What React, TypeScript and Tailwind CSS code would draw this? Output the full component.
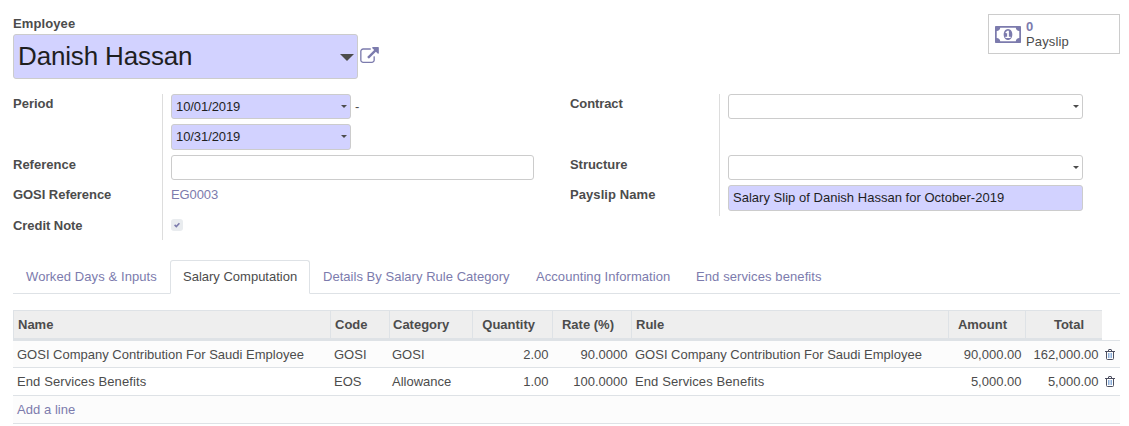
import React from "react";

const TABS = [
  { label: "Worked Days & Inputs", width: "w-[157px]", tracking: "tracking-[0.09px]" },
  { label: "Salary Computation", width: "w-[140px]", tracking: "tracking-normal", active: true },
  { label: "Details By Salary Rule Category", width: "w-[213px]", tracking: "tracking-[0.03px]" },
  { label: "Accounting Information", width: "w-[160px]", tracking: "tracking-[0.06px]" },
  { label: "End services benefits", width: "w-[152px]", tracking: "tracking-[0.1px]" },
];

const COLUMNS = [
  { label: "Name", className: "border-l pl-1" },
  { label: "Code", className: "border-l pl-1" },
  { label: "Category", className: "border-l pl-[3px]" },
  { label: "Quantity", className: "border-l pr-[17px] text-right" },
  { label: "Rate (%)", className: "border-l pr-[17px] text-right" },
  { label: "Rule", className: "border-l pl-1" },
  { label: "Amount", className: "border-l pr-[18px] text-right" },
  { label: "Total", className: "border-l pr-[18px] text-right" },
];

const LINES = [
  {
    name: "GOSI Company Contribution For Saudi Employee",
    code: "GOSI",
    category: "GOSI",
    quantity: "2.00",
    rate: "90.0000",
    amount: "90,000.00",
    total: "162,000.00",
    tracking: "tracking-normal",
  },
  {
    name: "End Services Benefits",
    code: "EOS",
    category: "Allowance",
    quantity: "1.00",
    rate: "100.0000",
    amount: "5,000.00",
    total: "5,000.00",
    tracking: "tracking-[0.1px]",
  },
];

const GRID = "grid grid-cols-[317px_59px_83px_80px_79px_317px_77px_77px_18px]";

function ExternalLinkIcon() {
  return (
    <svg className="mt-[13px] ml-[2px] h-[16px] w-[19px] shrink-0" viewBox="0 0 1792 1536" fill="#7c7bad">
      <path d="M1408 928v320q0 119-84.5 203.5t-203.5 84.5h-832q-119 0-203.5-84.5t-84.5-203.5v-832q0-119 84.5-203.5t203.5-84.5h704q14 0 23 9t9 23v64q0 14-9 23t-23 9h-704q-66 0-113 47t-47 113v832q0 66 47 113t113 47h832q66 0 113-47t47-113v-320q0-14 9-23t23-9h64q14 0 23 9t9 23zm384-864v512q0 26-19 45t-45 19-45-19l-176-176-652 652q-10 10-23 10t-23-10l-114-114q-10-10-10-23t10-23l652-652-176-176q-19-19-19-45t19-45 45-19h512q26 0 45 19t19 45z" />
    </svg>
  );
}

function MoneyIcon() {
  return (
    <svg className="h-[17px] w-[26px] shrink-0" viewBox="0 256 1920 1280" preserveAspectRatio="none" fill="#7c7bad">
      <path d="M768 1152h384v-96h-128v-448h-114l-148 137 77 80q42-37 55-57h2v288h-128v96zm512-256q0 70-21 142t-59.5 134-101.5 101-138 39-138-39-101.5-101-59.5-134-21-142 21-142 59.5-134 101.5-101 138-39 138 39 101.5 101 59.5 134 21 142zm512 256v-512q-106 0-181-75t-75-181h-1152q0 106-75 181t-181 75v512q106 0 181 75t75 181h1152q0-106 75-181t181-75zm128-832v1152q0 26-19 45t-45 19h-1792q-26 0-45-19t-19-45v-1152q0-26 19-45t45-19h1792q26 0 45 19t19 45z" />
    </svg>
  );
}

function TrashIcon() {
  return (
    <svg className="h-[11px] w-[10px]" viewBox="0 0 10 11" fill="none">
      <path d="M3.5 4v5M5 4v5M6.5 4v5" stroke="#6f9ad0" strokeWidth="0.8" />
      <path d="M0 2.5h10M1.5 2.5v7q0 1 1 1h5q1 0 1-1v-7M3.3 2.2l.5-1.7h2.4l.5 1.7" stroke="#4c4f60" />
    </svg>
  );
}

function Caret() {
  return (
    <svg className="-mt-px h-[3px] w-[6px] shrink-0" viewBox="0 0 6 3" fill="#4c4c4c">
      <path d="M0 0h6L3 3z" />
    </svg>
  );
}

function Field({ value = "", required = false, caret = false, className = "" }: {
  value?: string;
  required?: boolean;
  caret?: boolean;
  className?: string;
}) {
  return (
    <div
      className={`flex items-center justify-between rounded-[3px] border border-[#ccc] pr-[3px] pl-1 text-[#1f1f1f] ${
        required ? "bg-[#d2d2ff]" : "bg-white"
      } ${className}`}
    >
      <span>{value}</span>
      {caret && <Caret />}
    </div>
  );
}

function Label({ children, className = "" }: { children: React.ReactNode; className?: string }) {
  return <div className={`font-bold ${className}`}>{children}</div>;
}

export default function App() {
  return (
    <div className="h-[426px] w-[1129px] overflow-hidden bg-white pr-[9px] pl-[13px] font-['Liberation_Sans',Arial,sans-serif] text-[13px] leading-[20px] text-[#4c4c4c]">
      <header className="flex h-[94px] justify-between pt-[14px]">
        <div>
          <Label className="tracking-[0.1px]">Employee</Label>
          <div className="flex">
            <div className="flex h-[45px] w-[345px] items-center justify-between rounded-[3px] border border-[#ccc] bg-[#d2d2ff] pr-[3px] pl-1 text-[26px] text-[#1f1f1f]">
              <span className="pb-[2px] tracking-[-0.15px]">Danish Hassan</span>
              <svg className="mt-[2px] h-[7px] w-[14px]" viewBox="0 0 14 7" fill="#4c4c4c">
                <path d="M0 0h14L7 7z" />
              </svg>
            </div>
            <ExternalLinkIcon />
          </div>
        </div>
        <div className="flex h-10 w-[132px] items-center gap-[5px] border border-[#ccc] pl-[6px]">
          <MoneyIcon />
          <div className="leading-[15px]">
            <div className="font-bold text-[#7c7bad]">0</div>
            <div className="tracking-[0.15px]">Payslip</div>
          </div>
        </div>
      </header>

      <section className="flex h-[166px]">
        <div className="flex w-[557px]">
          <div className="h-[146px] w-[150px] border-r border-[#ddd]">
            <Label className="h-[61px]">Period</Label>
            <Label className="h-[30px]">Reference</Label>
            <Label className="h-[31px] tracking-[-0.05px]">GOSI Reference</Label>
            <Label className="tracking-[-0.05px]">Credit Note</Label>
          </div>
          <div className="pl-2">
            <div className="flex h-[30px] gap-1">
              <Field value="10/01/2019" required caret className="h-[25px] w-[180px] tracking-[-0.08px]" />
              <span className="pt-[3px]">-</span>
            </div>
            <Field value="10/31/2019" required caret className="h-[26px] w-[180px] tracking-[-0.08px]" />
            <Field className="mt-[5px] h-[25px] w-[363px]" />
            <div className="mt-[5px] tracking-[-0.1px] text-[#7c7bad]">EG0003</div>
            <div className="mt-[14px] flex h-3 w-3 items-center justify-center rounded-[3px] bg-[#e9ecef]">
              <svg className="h-[6px] w-[6px]" viewBox="0 0 6 6" fill="none" stroke="#7c7bad" strokeWidth="1.6">
                <path d="M.6 2.9 2.3 4.5 5.4 1.2" />
              </svg>
            </div>
          </div>
        </div>
        <div className="flex">
          <div className="h-[122px] w-[150px] border-r border-[#ddd]">
            <Label className="h-[61px] tracking-[-0.1px]">Contract</Label>
            <Label className="h-[30px] tracking-[-0.05px]">Structure</Label>
            <Label className="tracking-[0.08px]">Payslip Name</Label>
          </div>
          <div className="pl-2">
            <Field caret className="h-[25px] w-[355px]" />
            <Field caret className="mt-[36px] h-[25px] w-[355px]" />
            <Field
              value="Salary Slip of Danish Hassan for October-2019"
              required
              className="mt-[5px] h-[26px] w-[355px] tracking-[0.02px]"
            />
          </div>
        </div>
      </section>

      <nav className="flex h-[34px] w-[1107px] border-b border-[#dee2e6]">
        {TABS.map((tab) => (
          <div
            key={tab.label}
            className={`h-[34px] shrink-0 whitespace-nowrap ${tab.width} ${tab.tracking} ${
              tab.active
                ? "rounded-t-[3px] border border-[#dee2e6] border-b-white bg-white pt-[6px] pl-3"
                : "pt-[7px] pl-[13px] text-[#7c7bad]"
            }`}
          >
            {tab.label}
          </div>
        ))}
      </nav>

      <div className="mt-4 w-[1107px] whitespace-nowrap">
        <div className={`h-[31px] font-bold ${GRID}`}>
          {COLUMNS.map((column) => (
            <div
              key={column.label}
              className={`border-t border-b-[3px] border-[#dee2e6] bg-[#eee] pt-[4px] ${column.className}`}
            >
              {column.label}
            </div>
          ))}
          <div className="border-b border-[#dee2e6]" />
        </div>
        {LINES.map((line, index) => (
          <div
            key={line.name}
            className={`border-b border-[#dee2e6] pt-1 ${GRID} ${
              index % 2 === 0 ? "h-[27px] bg-[#fcfcfc]" : "h-[28px] bg-white"
            }`}
          >
            <div className={`pl-1 ${line.tracking}`}>{line.name}</div>
            <div className="pl-1">{line.code}</div>
            <div className="pl-[3px]">{line.category}</div>
            <div className="pr-[3.5px] text-right">{line.quantity}</div>
            <div className="pr-[3.5px] text-right">{line.rate}</div>
            <div className={`pl-1 ${line.tracking}`}>{line.name}</div>
            <div className="pr-[3.5px] text-right">{line.amount}</div>
            <div className="pr-[3.5px] text-right">{line.total}</div>
            <div className="pt-[4px] pl-[3px]">
              <TrashIcon />
            </div>
          </div>
        ))}
        <div className="h-[28px] border-b border-[#dee2e6] bg-[#fcfcfc] pt-1 pl-1 tracking-[0.05px] text-[#7c7bad]">Add a line</div>
      </div>
    </div>
  );
}
